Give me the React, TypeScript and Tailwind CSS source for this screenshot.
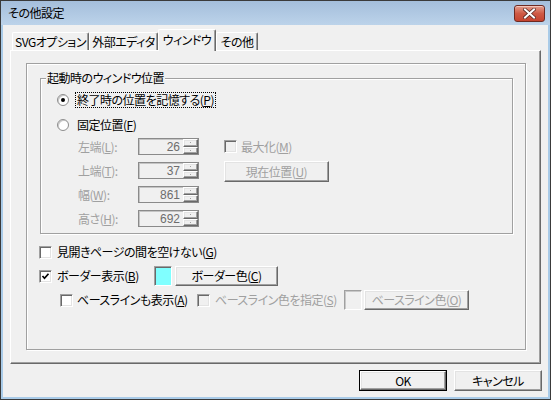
import React from "react";

const font = "font-['Noto_Sans_CJK_JP',sans-serif] [font-feature-settings:'palt'] text-[12px] leading-none tracking-[-0.5px]";

const raised =
  "bg-[#f0f0f0] border border-t-white border-l-white border-r-[#696969] border-b-[#696969] shadow-[inset_-1px_-1px_0_#a0a0a0,inset_1px_1px_0_#e3e3e3]";

function Btn(props: any) {
  const cls = props.disabled ? "text-[#a0a0a0]" : "text-black";
  const btn = (
    <div className={`${raised} ${cls} flex items-center justify-center h-full w-full`}>
      {props.children}
    </div>
  );
  if (props.isDefault) {
    return <div className={`${props.className} border border-black`}>{btn}</div>;
  }
  return <div className={props.className}>{btn}</div>;
}

function Check(props: any) {
  return (
    <div
      className={`w-[13px] h-[13px] shrink-0 border border-t-[#a0a0a0] border-l-[#a0a0a0] border-b-white border-r-white shadow-[inset_1px_1px_0_#696969,inset_-1px_-1px_0_#e3e3e3] flex items-center justify-center ${
        props.disabled ? "bg-[#f0f0f0]" : "bg-white"
      }`}
    >
      {props.checked && (
        <svg width="9" height="9" viewBox="0 0 9 9">
          <polyline points="1.5,4 3.5,6.2 7.5,1.8" fill="none" stroke="#000" strokeWidth="1.7" />
        </svg>
      )}
    </div>
  );
}

function Radio(props: any) {
  return (
    <div className="w-[12px] h-[12px] shrink-0 rounded-full bg-white border border-[#8d8d8d] shadow-[inset_1px_1px_0_#c8c8c8] flex items-center justify-center">
      {props.checked && <div className="w-[4px] h-[4px] rounded-full bg-black" />}
    </div>
  );
}

function Spin(props: any) {
  return (
    <div className="w-[61px] h-[17px] border border-[#8a8a8a] shadow-[inset_1px_1px_0_#c4c4c4] bg-[#f0f0f0] flex items-stretch">
      <div className="flex-1 flex items-center justify-end pr-[3px] text-[#6d6d6d] font-['Liberation_Sans',sans-serif] text-[12px] tracking-normal">
        {props.value}
      </div>
      <div className="w-[15px] flex flex-col">
        <div className={`${raised} flex-1 flex items-center justify-center`}>
          <div className="w-[1px] h-[1px] bg-[#a0a0a0]" />
        </div>
        <div className={`${raised} flex-1 flex items-center justify-center`}>
          <div className="w-[1px] h-[1px] bg-[#a0a0a0]" />
        </div>
      </div>
    </div>
  );
}

function SpinRow(props: any) {
  return (
    <div className="flex items-center h-[17px]">
      <div className="w-[60px] text-[#a0a0a0]">{props.label}</div>
      <Spin value={props.value} />
    </div>
  );
}

export default function App() {
  return (
    <div className={`${font} w-[551px] h-[400px] border border-[#3a3a3a] bg-[#a9cbe8] flex flex-col text-black select-none`}>
      {/* title bar */}
      <div className="h-[24px] shrink-0 bg-linear-to-b from-[#a4bedb] to-[#bcd3ea] flex items-start justify-between">
        <div className="pl-[7px] pt-[6px] text-[12px]">その他設定</div>
        <div className="mt-[4px] mr-[5px] w-[31px] h-[17px] rounded-[3px] border border-[#6e2a22] bg-linear-to-b from-[#e29c8c] via-[#cf5a45] to-[#c5432f] shadow-[inset_0_1px_0_#f3c5ba] flex items-center justify-center">
          <svg width="13" height="11" viewBox="0 0 13 11">
            <path d="M2 1.5 L11 9.5 M11 1.5 L2 9.5" stroke="#5a2a24" strokeWidth="3.6" strokeLinecap="square" />
            <path d="M2 1.5 L11 9.5 M11 1.5 L2 9.5" stroke="#fff" strokeWidth="2" strokeLinecap="square" />
          </svg>
        </div>
      </div>

      {/* client */}
      <div className="mx-[2px] mb-[2px] flex-1 bg-[#f0f0f0] flex flex-col pt-[4px] pr-[6px]">
        {/* tabs */}
        <div className="flex items-end h-[21px] pl-[9px]">
          <div className="w-[77px] h-[18px] border-t border-l border-t-white border-l-white border-r border-r-[#696969] shadow-[inset_-1px_0_0_#a0a0a0] rounded-t-[2px] flex items-center justify-center">
            SVGオプション
          </div>
          <div className="w-[69px] h-[18px] border-t border-l border-t-white border-l-white border-r border-r-[#696969] shadow-[inset_-1px_0_0_#a0a0a0] rounded-t-[2px] flex items-center justify-center">
            外部エディタ
          </div>
          <div className="relative z-10 -mb-px w-[58px] h-[22px] bg-[#f0f0f0] border-t border-l border-t-white border-l-white border-r border-r-[#696969] shadow-[inset_-1px_0_0_#a0a0a0] rounded-t-[2px] flex items-center justify-center pb-[2px]">
            ウィンドウ
          </div>
          <div className="w-[42px] h-[18px] border-t border-l border-t-white border-l-white border-r border-r-[#696969] shadow-[inset_-1px_0_0_#a0a0a0] rounded-t-[2px] flex items-center justify-center">
            その他
          </div>
        </div>

        {/* panel */}
        <div className="ml-[7px] w-[531px] h-[314px] border border-t-white border-l-white border-r-[#696969] border-b-[#696969] shadow-[inset_-1px_-1px_0_#a0a0a0] pl-[15px] pt-[12px]">
          <div className="w-[500px] h-[287px] border border-[#a0a0a0] shadow-[1px_1px_0_#fff,inset_1px_1px_0_#fff]">
            <fieldset className="mt-[7px] ml-[13px] w-[473px] border border-[#a0a0a0] shadow-[inset_1px_1px_0_#fff,1px_1px_0_#fff] pb-[6px]">
              <legend className="ml-[5px] px-[1px] bg-[#f0f0f0] h-[14px] flex items-center">起動時のウィンドウ位置</legend>
              <div className="pl-[16px] pt-[7px] flex flex-col">
                <div className="flex items-center gap-[6px] h-[16px]">
                  <Radio checked />
                  <span className="border border-dotted border-black px-[1px] py-[1px]">
                    終了時の位置を記憶する(<u>P</u>)
                  </span>
                </div>
                <div className="flex items-center gap-[6px] h-[16px] mt-[9px]">
                  <Radio />
                  <span className="px-[2px]">
                    固定位置(<u>F</u>)
                  </span>
                </div>
                <div className="flex mt-[5px] pl-[21px]">
                  <div className="flex flex-col gap-[7px]">
                    <SpinRow label={<>左端(<u>L</u>):</>} value="26" />
                    <SpinRow label={<>上端(<u>T</u>):</>} value="37" />
                    <SpinRow label={<>幅(<u>W</u>):</>} value="861" />
                    <SpinRow label={<>高さ(<u>H</u>):</>} value="692" />
                  </div>
                  <div className="ml-[25px] flex flex-col">
                    <div className="flex items-center gap-[4px] h-[17px] text-[#a0a0a0]">
                      <Check disabled />
                      <span>最大化(<u>M</u>)</span>
                    </div>
                    <Btn className="mt-[6px] w-[105px] h-[21px]" disabled>
                      現在位置(<u>U</u>)
                    </Btn>
                  </div>
                </div>
              </div>
            </fieldset>

            <div className="ml-[12px] flex flex-col">
              <div className="mt-[10px] flex items-center gap-[5px] h-[16px]">
                <Check />
                <span>見開きページの間を空けない(<u>G</u>)</span>
              </div>
              <div className="mt-[6px] flex items-center h-[20px]">
                <Check checked />
                <span className="ml-[5px] w-[97px]">ボーダー表示(<u>B</u>)</span>
                <div className="w-[18px] h-[20px] bg-[#80ffff] border border-t-[#a0a0a0] border-l-[#a0a0a0] border-b-white border-r-white shadow-[inset_1px_1px_0_#696969]" />
                <Btn className="ml-[3px] w-[103px] h-[20px]">
                  ボーダー色(<u>C</u>)
                </Btn>
              </div>
              <div className="mt-[4px] flex items-center h-[20px] pl-[21px]">
                <Check />
                <span className="ml-[4px] w-[120px]">ベースラインも表示(<u>A</u>)</span>
                <Check disabled />
                <span className="ml-[5px] w-[129px] text-[#a0a0a0]">ベースライン色を指定(<u>S</u>)</span>
                <div className="w-[18px] h-[20px] bg-[#f0f0f0] border border-t-[#a0a0a0] border-l-[#a0a0a0] border-b-white border-r-white shadow-[inset_1px_1px_0_#c8c8c8]" />
                <Btn className="ml-[2px] w-[105px] h-[20px]" disabled>
                  ベースライン色(<u>O</u>)
                </Btn>
              </div>
            </div>
          </div>
        </div>

        {/* dialog buttons */}
        <div className="mt-[6px] flex justify-end gap-[7px]">
          <Btn className="w-[88px] h-[21px]" isDefault>
            OK
          </Btn>
          <Btn className="w-[88px] h-[21px]">キャンセル</Btn>
        </div>
      </div>
    </div>
  );
}
